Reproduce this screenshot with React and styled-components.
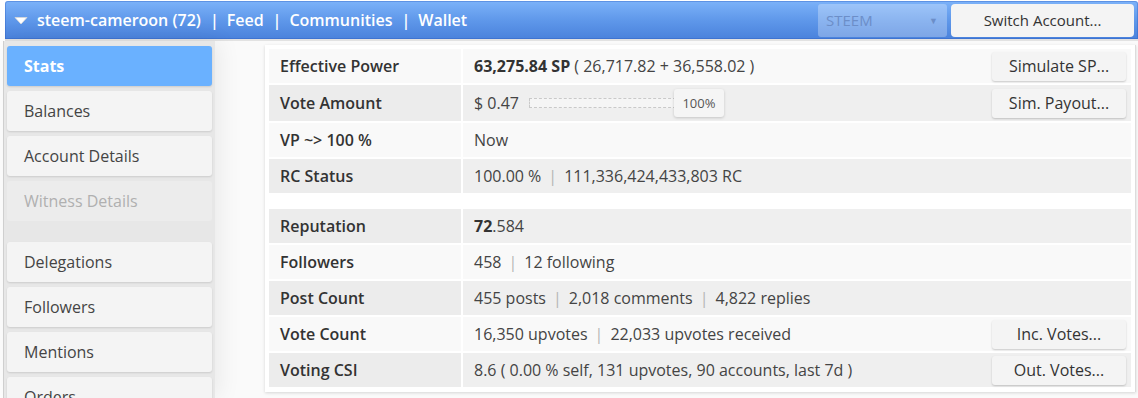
import React from 'react';
import styled, { createGlobalStyle } from 'styled-components';

const GlobalStyle = createGlobalStyle`
  html, body {
    margin: 0;
    padding: 0;
    background: #ffffff;
    overflow: hidden;
  }
  body {
    font-family: "Open Sans", "Liberation Sans", sans-serif;
    color: #333;
  }
`;

const Page = styled.div`
  display: flex;
  flex-direction: column;
  height: 100vh;
  padding: 1px 0 0 3px;
  box-sizing: border-box;
`;

const Header = styled.div`
  display: flex;
  align-items: center;
  height: 38px;
  margin-left: 2px;
  padding: 0 4px 0 9px;
  background: linear-gradient(to bottom, #7cb2f9 0%, #5f98ea 50%, #4a82dc 100%);
  border-radius: 3px 3px 0 0;
  box-shadow: inset 0 0 0 1px rgba(40, 90, 190, 0.35);
  border-bottom: 2px solid #e2e2e2;
  box-sizing: content-box;
`;

const Caret = styled.svg`
  width: 14px;
  height: 9px;
  margin-right: 9px;
  margin-top: 1px;
`;

const NavText = styled.span`
  color: #fff;
  font-size: 16px;
  font-weight: 600;
  white-space: nowrap;
`;

const Pipe = styled.span`
  color: #fff;
  font-size: 16px;
  font-weight: 600;
  margin: 0 8px 0 9px;
`;

const Spacer = styled.div`
  flex: 1;
`;

const ChainSelect = styled.div`
  display: flex;
  align-items: center;
  justify-content: space-between;
  width: 129px;
  height: 33px;
  padding: 0 9px 0 8px;
  box-sizing: border-box;
  margin-right: 4px;
  background: rgba(255, 255, 255, 0.28);
  border-radius: 3px;
  color: #6c8ec8;
  font-size: 15px;
  span:last-child {
    font-size: 9px;
  }
`;

const SwitchButton = styled.div`
  display: flex;
  align-items: center;
  justify-content: center;
  width: 183px;
  height: 33px;
  background: #f4f4f4;
  border-radius: 4px;
  color: #333;
  font-size: 15px;
`;

const Main = styled.div`
  display: flex;
  flex: 1;
  min-height: 0;
  background: #fafafa;
`;

const Sidebar = styled.div`
  display: flex;
  flex-direction: column;
  gap: 5px;
  width: 205px;
  padding: 5px 3px 0 3px;
  background: #e7e7e7;
  border-left: 1px solid #cfcfcf;
  box-shadow: 4px 0 22px rgba(0, 0, 0, 0.07);
  flex-shrink: 0;
  z-index: 1;
`;

const SideItem = styled.div`
  display: flex;
  align-items: center;
  height: 40px;
  flex-shrink: 0;
  padding-left: 17px;
  border-radius: 3px;
  font-size: 16px;
  background: ${p => (p.active ? '#6ab1ff' : p.disabled ? '#ececec' : '#f4f4f4')};
  color: ${p => (p.active ? '#fff' : p.disabled ? '#b0b0b0' : '#444')};
  font-weight: ${p => (p.active ? 700 : 400)};
  box-shadow: ${p => (p.disabled ? 'none' : '0 1px 2px rgba(0, 0, 0, 0.12)')};
  margin-bottom: ${p => (p.gapAfter ? '16px' : '0')};
`;

const Content = styled.div`
  padding: 4px 0 0 50px;
`;

const Panel = styled.div`
  width: 862px;
  padding: 4px 4px 5px 4px;
  background: #ffffff;
  box-shadow: 0 1px 3px rgba(0, 0, 0, 0.15);
  border-right: 1px solid #dcdcdc;
  display: flex;
  flex-direction: column;
  gap: 16px;
`;

const Table = styled.div`
  display: flex;
  flex-direction: column;
  gap: 2px;
`;

const Row = styled.div`
  display: grid;
  grid-template-columns: 192px 1fr;
  column-gap: 2px;
  min-height: ${p => (p.tall ? '36px' : '34px')};
  font-size: 16px;
`;

const Label = styled.div`
  display: flex;
  align-items: center;
  padding-left: 11px;
  font-weight: 600;
  color: #333;
  background: ${p => (p.shade ? '#ececec' : '#f9f9f9')};
`;

const Value = styled.div`
  display: flex;
  align-items: center;
  padding-left: 11px;
  color: #444;
  white-space: nowrap;
  background: ${p => (p.shade ? '#efefef' : '#f9f9f9')};
`;

const Strong = styled.span`
  font-weight: 700;
  color: #333;
`;

const Sep = styled.span`
  color: #b5b5b5;
  margin: 0 7px;
`;

const RowButton = styled.div`
  margin-left: auto;
  margin-right: 5px;
  display: flex;
  align-items: center;
  justify-content: center;
  width: 134px;
  height: 29px;
  background: #f4f4f4;
  border-radius: 3px;
  box-shadow: 0 1px 2px rgba(0, 0, 0, 0.2);
  color: #333;
  font-size: 16px;
`;

const Slider = styled.div`
  display: flex;
  align-items: center;
  margin-left: 10px;
`;

const Track = styled.div`
  width: 150px;
  height: 8px;
  background: #f5f5f5;
  border: 1px dashed #c9c9c9;
`;

const Thumb = styled.div`
  display: flex;
  align-items: center;
  justify-content: center;
  width: 50px;
  height: 28px;
  margin-left: -7px;
  background: #f5f5f5;
  border-radius: 3px;
  box-shadow: 0 1px 3px rgba(0, 0, 0, 0.18);
  font-size: 13px;
  color: #555;
`;

const sideItems = [
  { name: 'Stats', active: true },
  { name: 'Balances' },
  { name: 'Account Details' },
  { name: 'Witness Details', disabled: true, gapAfter: true },
  { name: 'Delegations' },
  { name: 'Followers' },
  { name: 'Mentions' },
  { name: 'Orders' },
  { name: 'System Info' },
];

export default function App() {
  return (
    <>
      <GlobalStyle />
      <Page>
        <Header>
          <Caret viewBox="0 0 14 9">
            <path d="M1 1.5 L13 1.5 L7 8 Z" fill="#fff" stroke="#d8d8d8" strokeWidth="0.8" strokeLinejoin="round" />
          </Caret>
          <NavText>steem-cameroon (72)</NavText>
          <Pipe>|</Pipe>
          <NavText>Feed</NavText>
          <Pipe>|</Pipe>
          <NavText>Communities</NavText>
          <Pipe>|</Pipe>
          <NavText>Wallet</NavText>
          <Spacer />
          <ChainSelect>
            <span>STEEM</span>
            <span>▼</span>
          </ChainSelect>
          <SwitchButton>Switch Account...</SwitchButton>
        </Header>
        <Main>
          <Sidebar>
            {sideItems.map(item => (
              <SideItem
                key={item.name}
                active={item.active}
                disabled={item.disabled}
                gapAfter={item.gapAfter}
              >
                {item.name}
              </SideItem>
            ))}
          </Sidebar>
          <Content>
            <Panel>
              <Table>
                <Row>
                  <Label>Effective Power</Label>
                  <Value>
                    <Strong>63,275.84 SP</Strong>&nbsp;( 26,717.82 + 36,558.02 )
                    <RowButton>Simulate SP...</RowButton>
                  </Value>
                </Row>
                <Row tall>
                  <Label shade>Vote Amount</Label>
                  <Value shade>
                    $ 0.47
                    <Slider>
                      <Track />
                      <Thumb>100%</Thumb>
                    </Slider>
                    <RowButton>Sim. Payout...</RowButton>
                  </Value>
                </Row>
                <Row>
                  <Label>VP ~&gt; 100 %</Label>
                  <Value>Now</Value>
                </Row>
                <Row>
                  <Label shade>RC Status</Label>
                  <Value shade>
                    100.00 %<Sep>|</Sep>111,336,424,433,803 RC
                  </Value>
                </Row>
              </Table>
              <Table>
                <Row>
                  <Label shade>Reputation</Label>
                  <Value shade>
                    <Strong>72</Strong>.584
                  </Value>
                </Row>
                <Row>
                  <Label>Followers</Label>
                  <Value>
                    458<Sep>|</Sep>12 following
                  </Value>
                </Row>
                <Row>
                  <Label shade>Post Count</Label>
                  <Value shade>
                    455 posts<Sep>|</Sep>2,018 comments<Sep>|</Sep>4,822 replies
                  </Value>
                </Row>
                <Row>
                  <Label>Vote Count</Label>
                  <Value>
                    16,350 upvotes<Sep>|</Sep>22,033 upvotes received
                    <RowButton>Inc. Votes...</RowButton>
                  </Value>
                </Row>
                <Row>
                  <Label shade>Voting CSI</Label>
                  <Value shade>
                    8.6 ( 0.00 % self, 131 upvotes, 90 accounts, last 7d )
                    <RowButton>Out. Votes...</RowButton>
                  </Value>
                </Row>
              </Table>
            </Panel>
          </Content>
        </Main>
      </Page>
    </>
  );
}
